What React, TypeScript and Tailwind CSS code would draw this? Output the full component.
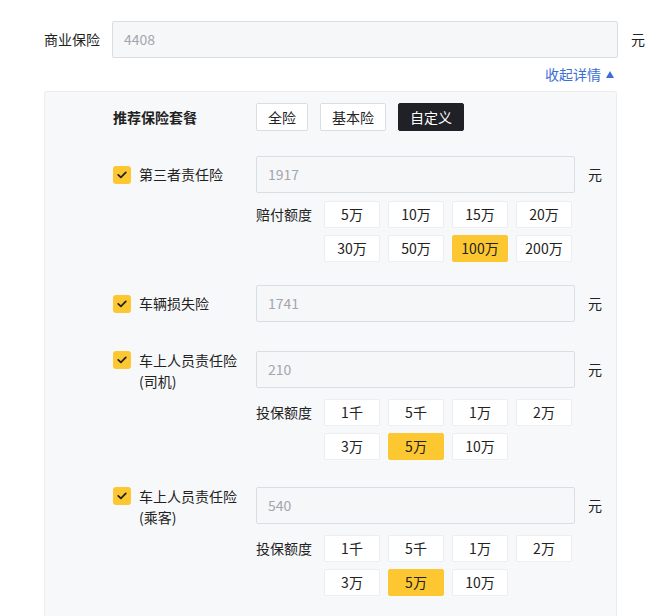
import React from "react";

type Section = {
  label: string[];
  value: string;
  optionLabel?: string;
  options?: string[];
  selected?: string;
  top: string;
  optTop: string;
};

const sections: Section[] = [
  {
    label: ["第三者责任险"],
    value: "1917",
    optionLabel: "赔付额度",
    options: ["5万", "10万", "15万", "20万", "30万", "50万", "100万", "200万"],
    selected: "100万",
    top: "mt-[25px]",
    optTop: "mt-[8px]",
  },
  { label: ["车辆损失险"], value: "1741", top: "mt-[23px]", optTop: "" },
  {
    label: ["车上人员责任险", "(司机)"],
    value: "210",
    optionLabel: "投保额度",
    options: ["1千", "5千", "1万", "2万", "3万", "5万", "10万"],
    selected: "5万",
    top: "mt-[28px]",
    optTop: "mt-[11px]",
  },
  {
    label: ["车上人员责任险", "(乘客)"],
    value: "540",
    optionLabel: "投保额度",
    options: ["1千", "5千", "1万", "2万", "3万", "5万", "10万"],
    selected: "5万",
    top: "mt-[26px]",
    optTop: "mt-[11px]",
  },
];

function Check() {
  return (
    <span className="mt-[1px] flex h-[18px] w-[18px] shrink-0 items-center justify-center rounded-[3px] bg-[#fcc730]">
      <svg width="10" height="8" viewBox="0 0 10 8" fill="none">
        <path d="M1.2 3.8 L3.9 6.4 L8.8 1.4" stroke="#1f2024" strokeWidth="1.7" strokeLinecap="round" strokeLinejoin="round" />
      </svg>
    </span>
  );
}

function InsuranceRow({ s }: { s: Section }) {
  const multi = s.label.length > 1;
  return (
    <div className={s.top}>
      <div className="flex items-center">
        <div className={`flex w-[143px] shrink-0 gap-2 ${multi ? "items-start mb-[-4px]" : "items-center"}`}>
          <Check />
          <div className="whitespace-nowrap leading-[21px] text-[#222]">
            {s.label.map((l) => (
              <div key={l}>{l}</div>
            ))}
          </div>
        </div>
        <div className="flex h-[37px] w-[319px] shrink-0 items-center rounded-[2px] border border-[#dadde2] bg-[#f6f7f9] pl-[11px] text-[#a3a6ad]">
          {s.value}
        </div>
        <span className="ml-[13px] shrink-0 text-[#222]">元</span>
      </div>
      {s.options && (
        <div className={`ml-[143px] flex ${s.optTop}`}>
          <div className="w-[56px] shrink-0 whitespace-nowrap leading-[27px] text-[#222]">{s.optionLabel}</div>
          <div className="ml-3 grid grid-cols-[repeat(4,56px)] gap-x-[8px] gap-y-[7px]">
            {s.options.map((o) => (
              <div
                key={o}
                className={`flex h-[27px] items-center justify-center rounded-[2px] border ${
                  o === s.selected ? "border-[#fcc730] bg-[#fcc730]" : "border-[#eceef1] bg-white"
                } text-[#222]`}
              >
                {o}
              </div>
            ))}
          </div>
        </div>
      )}
    </div>
  );
}

export default function App() {
  return (
    <div
      className="min-h-screen bg-white pt-[21px] text-[14px]"
      style={{ fontFamily: '"Noto Sans CJK SC", "Noto Sans", sans-serif' }}
    >
      <div className="ml-[44px] w-[573px]">
        {/* 商业保险 */}
        <div className="flex items-center">
          <div className="w-[56px] shrink-0 whitespace-nowrap text-[#222]">商业保险</div>
          <div className="ml-3 flex h-[37px] w-[506px] shrink-0 items-center rounded-[2px] border border-[#dadde2] bg-[#f6f7f9] pl-[11px] text-[#a3a6ad]">
            4408
          </div>
          <span className="ml-[13px] shrink-0 text-[#222]">元</span>
        </div>

        <div className="mt-[6px] flex items-center justify-end pr-[3px] leading-[21px] text-[#3b6fd6]">
          <span>收起详情</span>
          <svg className="ml-[5px]" width="8" height="7" viewBox="0 0 8 7">
            <path d="M4 0 L8 7 L0 7 Z" fill="#3b6fd6" />
          </svg>
        </div>

        {/* 详情面板 */}
        <div className="mt-[6px] h-[540px] rounded-[3px] border border-[#eaecf0] bg-[#f7f8fa] pl-[68px] pt-[11px]">
          <div className="flex items-center">
            <div className="w-[143px] shrink-0 font-bold text-[#222]">推荐保险套餐</div>
            <div className="flex gap-3">
              <button className="h-[28px] rounded-[2px] border border-[#dadde2] bg-white px-[11px] text-[#222]">全险</button>
              <button className="h-[28px] rounded-[2px] border border-[#dadde2] bg-white px-[11px] text-[#222]">基本险</button>
              <button className="h-[28px] rounded-[2px] border border-[#1f2126] bg-[#1f2126] px-[11px] text-white">自定义</button>
            </div>
          </div>

          {sections.map((s) => (
            <InsuranceRow key={s.label.join("") + s.value} s={s} />
          ))}
        </div>
      </div>
    </div>
  );
}
